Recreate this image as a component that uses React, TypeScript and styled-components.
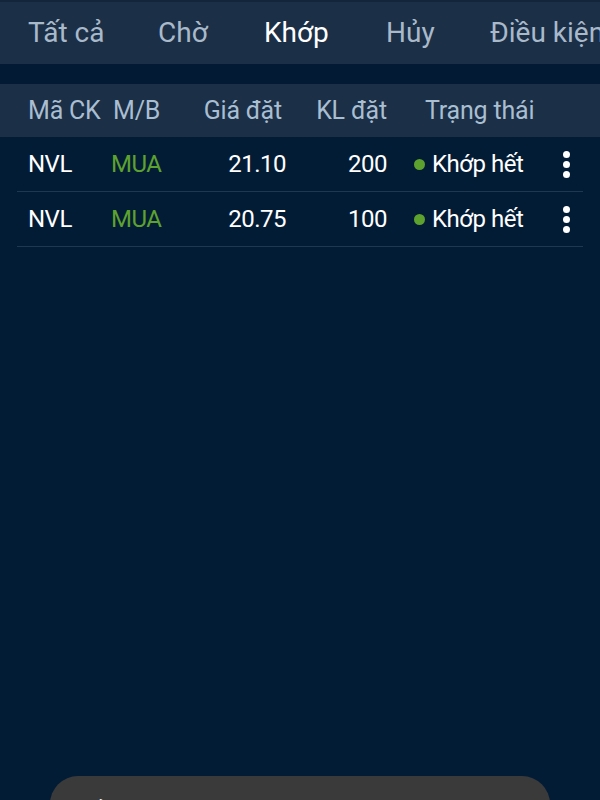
import React from "react"
import styled, { createGlobalStyle } from "styled-components"

const GlobalStyle = createGlobalStyle`
  html, body {
    margin: 0;
    padding: 0;
    background: #031c36;
  }
  body {
    font-family: Roboto, "Noto Sans", "Liberation Sans", sans-serif;
    min-height: 800px;
    overflow: hidden;
  }
`

const Page = styled.div`
  width: 600px;
  min-height: 800px;
  background: #031c36;
`

const Tabs = styled.div`
  display: flex;
  align-items: center;
  height: 62px;
  border-top: 2px solid #13253a;
  background: #1b2f47;
  white-space: nowrap;
  overflow: hidden;
  padding-left: 28px;
`

const Tab = styled.div<{ $active?: boolean; $w: number }>`
  flex: 0 0 ${p => p.$w}px;
  font-size: 28px;
  line-height: 62px;
  color: ${p => (p.$active ? "#ffffff" : "#a9b9ca")};
`

const Gap = styled.div`
  height: 20px;
  background: #021a33;
`

const columns = "83px 60px 115px 101px 1fr 40px"

const HeadRow = styled.div`
  display: grid;
  grid-template-columns: ${columns};
  align-items: center;
  height: 53px;
  padding: 0 17px 0 28px;
  background: #1b2f47;
  font-size: 25px;
  letter-spacing: -0.2px;
  color: #a9bed1;
`

const HeadCell = styled.div<{ $right?: boolean; $pad?: number; $padRight?: number }>`
  text-align: ${p => (p.$right ? "right" : "left")};
  padding-left: ${p => p.$pad ?? 0}px;
  padding-right: ${p => p.$padRight ?? 0}px;
  white-space: nowrap;
`

const Body = styled.div`
  padding: 0 17px;
`

const Row = styled.div`
  display: grid;
  grid-template-columns: ${columns};
  align-items: center;
  height: 54px;
  padding-left: 11px;
  border-bottom: 1px solid #1f3852;
  font-size: 24px;
  letter-spacing: -0.5px;
  color: #ffffff;
`

const Cell = styled.div<{ $right?: boolean; $green?: boolean }>`
  text-align: ${p => (p.$right ? "right" : "left")};
  color: ${p => (p.$green ? "#5da22e" : "#ffffff")};
  white-space: nowrap;
`

const Status = styled.div`
  display: flex;
  align-items: center;
  gap: 7px;
  padding-left: 27px;
  white-space: nowrap;
`

const Dot = styled.span`
  width: 11px;
  height: 11px;
  border-radius: 50%;
  background: #5da22e;
`

const Kebab = styled.div`
  display: flex;
  flex-direction: column;
  align-items: center;
  gap: 3px;
  padding-left: 7px;
  span {
    width: 7px;
    height: 7px;
    border-radius: 50%;
    background: #ffffff;
  }
`

const Toast = styled.div`
  position: fixed;
  top: 776px;
  left: 50px;
  width: 500px;
  height: 70px;
  border-radius: 28px;
  background: #3a3a3a;
  box-sizing: border-box;
  padding: 22px 0 0 24px;
  font-size: 24px;
  color: #ffffff;
  white-space: nowrap;
`

const tabs = [
  { label: "Tất cả", w: 130 },
  { label: "Chờ", w: 106 },
  { label: "Khớp", w: 122, active: true },
  { label: "Hủy", w: 104 },
  { label: "Điều kiện", w: 140 },
]

const orders = [
  { code: "NVL", side: "MUA", price: "21.10", vol: "200", status: "Khớp hết" },
  { code: "NVL", side: "MUA", price: "20.75", vol: "100", status: "Khớp hết" },
]

export default function App() {
  return (
    <Page>
      <GlobalStyle />
      <Tabs>
        {tabs.map(t => (
          <Tab key={t.label} $w={t.w} $active={t.active}>
            {t.label}
          </Tab>
        ))}
      </Tabs>
      <Gap />
      <HeadRow>
        <HeadCell>Mã CK</HeadCell>
        <HeadCell $pad={2}>M/B</HeadCell>
        <HeadCell $right $padRight={4}>Giá đặt</HeadCell>
        <HeadCell $right>KL đặt</HeadCell>
        <HeadCell $pad={38}>Trạng thái</HeadCell>
        <div />
      </HeadRow>
      <Body>
        {orders.map((o, i) => (
          <Row key={i}>
            <Cell>{o.code}</Cell>
            <Cell $green>{o.side}</Cell>
            <Cell $right>{o.price}</Cell>
            <Cell $right>{o.vol}</Cell>
            <Status>
              <Dot />
              {o.status}
            </Status>
            <Kebab>
              <span />
              <span />
              <span />
            </Kebab>
          </Row>
        ))}
      </Body>
      <Toast>Để xem thêm, vuốt sang trái</Toast>
    </Page>
  )
}
